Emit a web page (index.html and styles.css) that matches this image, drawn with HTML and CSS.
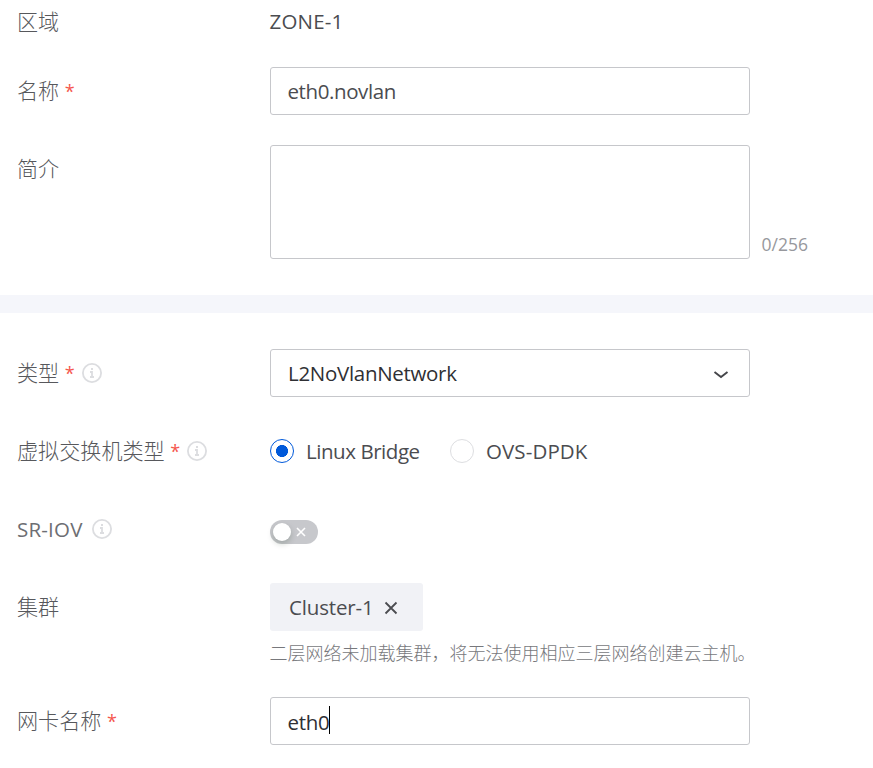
FILE: index.html
```html
<!DOCTYPE html>
<html lang="zh-CN">
<head>
<meta charset="utf-8">
<title>L2 Network</title>
<link rel="stylesheet" href="styles.css">
</head>
<body>
<form class="form">
  <section class="basic">
    <div class="row zone"><div class="label">区域</div><div class="value">ZONE-1</div></div>
    <div class="row name"><div class="label">名称<span class="req">*</span></div><div class="input"><span class="t t-name">eth0.novlan</span></div></div>
    <div class="row desc"><div class="label">简介</div><div class="input area"></div><span class="count">0/256</span></div>
  </section>
  <div class="divider"></div>
  <section class="detail">
    <div class="row"><div class="label">类型<span class="req">*</span><svg class="info" viewBox="0 0 20 20"><circle cx="10" cy="10" r="9.1"/><path d="M9 6h2M8 9h2v5M8 14h4"/></svg></div><div class="input select"><span class="t t-type">L2NoVlanNetwork</span><svg class="chev" viewBox="0 0 16 10"><path d="M1.500 2L8 7l6.500-5"/></svg></div></div>
    <div class="row"><div class="label">虚拟交换机类型<span class="req">*</span><svg class="info" viewBox="0 0 20 20"><circle cx="10" cy="10" r="9.1"/><path d="M9 6h2M8 9h2v5M8 14h4"/></svg></div><div class="radios"><span class="radio on"></span><span class="t t-linux">Linux Bridge</span><span class="radio"></span><span class="t t-ovs">OVS-DPDK</span></div></div>
    <div class="row"><div class="label"><span class="t-sr">SR-IOV</span><svg class="info" viewBox="0 0 20 20"><circle cx="10" cy="10" r="9.1"/><path d="M9 6h2M8 9h2v5M8 14h4"/></svg></div><div class="switch"><span class="knob"></span><svg class="off" viewBox="0 0 10 10"><path d="M1 1l8 8M9 1L1 9"/></svg></div></div>
    <div class="row cluster"><div class="label">集群</div><div class="stack"><div class="tag"><span class="t t-tag">Cluster-1</span><svg class="close" viewBox="0 0 14 14"><path d="M1.500 1.500l11 11M12.500 1.500l-11 11"/></svg></div><p class="hint">二层网络未加载集群，将无法使用相应三层网络创建云主机。</p></div></div>
    <div class="row"><div class="label">网卡名称<span class="req">*</span></div><div class="input"><span class="t t-eth">eth0</span><span class="caret"></span></div></div>
  </section>
</form>
</body>
</html>
```
FILE: styles.css
```css
* { box-sizing: border-box; }
body { margin: 0; width: 873px; height: 768px; overflow: hidden; background: #fff; color: #4b4c50; font: 400 20.5px/48px "Open Sans", "Noto Sans CJK SC", sans-serif; }
.basic { height: 295px; padding-left: 17px; }
.row { display: flex; height: 48px; margin-bottom: 30px; }
.zone { height: 43px; margin-bottom: 24px; line-height: 43px; }
.desc { height: 114px; margin-bottom: 0; }
.label { display: flex; align-items: center; width: 253px; height: 48px; flex: none; color: #57585c; font-size: 21.1px; font-weight: 300; }
.zone .label { height: 42px; }
.req { width: 9px; margin-left: 5.5px; color: #f5564d; font-size: 18px; font-weight: 400; }
.info { width: 20px; height: 20px; margin-left: 8px; fill: none; stroke: #dcdde0; stroke-width: 1.8; }
.input { display: flex; align-items: center; width: 480px; height: 48px; padding: 0 17px; border: 1px solid #c6c7cb; border-radius: 3px; }
.area { height: 114px; }
.t { margin-top: -1px; white-space: nowrap; }
.value { margin-left: -0.5px; letter-spacing: 0.2px; }
.t-name { margin-left: -0.5px; letter-spacing: -0.4px; }
.t-type { color: #2f3034; letter-spacing: -0.3px; }
.t-linux { width: 114px; margin-right: 30px; letter-spacing: -0.45px; }
.t-ovs { letter-spacing: 0.1px; }
.t-tag { width: 83px; letter-spacing: -0.15px; }
.t-eth { margin-top: 1px; margin-left: -0.5px; color: #2f3034; letter-spacing: -0.3px; }
.t-sr { width: 67px; color: #6d6e73; font-size: 20.5px; font-weight: 400; letter-spacing: 0.2px; }
.count { align-self: flex-end; margin-left: 11.5px; color: #97989d; font-size: 17.5px; line-height: 29px; }
.divider { height: 18px; background: #f5f6fb; }
.detail { padding: 36px 0 0 17px; }
.select { justify-content: space-between; padding-right: 20px; }
.chev { width: 16px; height: 10px; margin-top: 3px; fill: none; stroke: #45464a; stroke-width: 1.9; }
.radios { display: flex; align-items: center; }
.radio { width: 24px; height: 24px; margin-right: 12px; border: 1px solid #dddee1; border-radius: 50%; }
.radio.on { border-color: #0059da; background: radial-gradient(circle, #0059da 0 5.7px, transparent 6.3px); }
.switch { display: flex; align-items: center; align-self: center; width: 48px; height: 24px; padding: 0 3px; margin-top: 6px; border-radius: 12px; background: #c7c8cc; }
.knob { width: 18px; height: 18px; border-radius: 50%; background: #fff; box-shadow: 0 3px 6px rgba(0, 35, 11, 0.2); }
.off { width: 10px; height: 10px; margin-left: 5px; fill: none; stroke: #fff; stroke-width: 1.6; }
.cluster { height: 84px; }
.tag { display: flex; align-items: center; width: 153px; height: 48px; padding-left: 19px; border-radius: 3px; background: #f1f2f6; }
.close { width: 14px; height: 14px; margin: 2px 0 0 12px; fill: none; stroke: #4b4c50; stroke-width: 1.8; }
.hint { margin: 7px 0 0 -0.5px; color: #77787c; font-size: 18px; line-height: 30px; font-weight: 300; white-space: nowrap; }
.caret { width: 1px; height: 28px; margin-top: -2px; background: #000; }
```
